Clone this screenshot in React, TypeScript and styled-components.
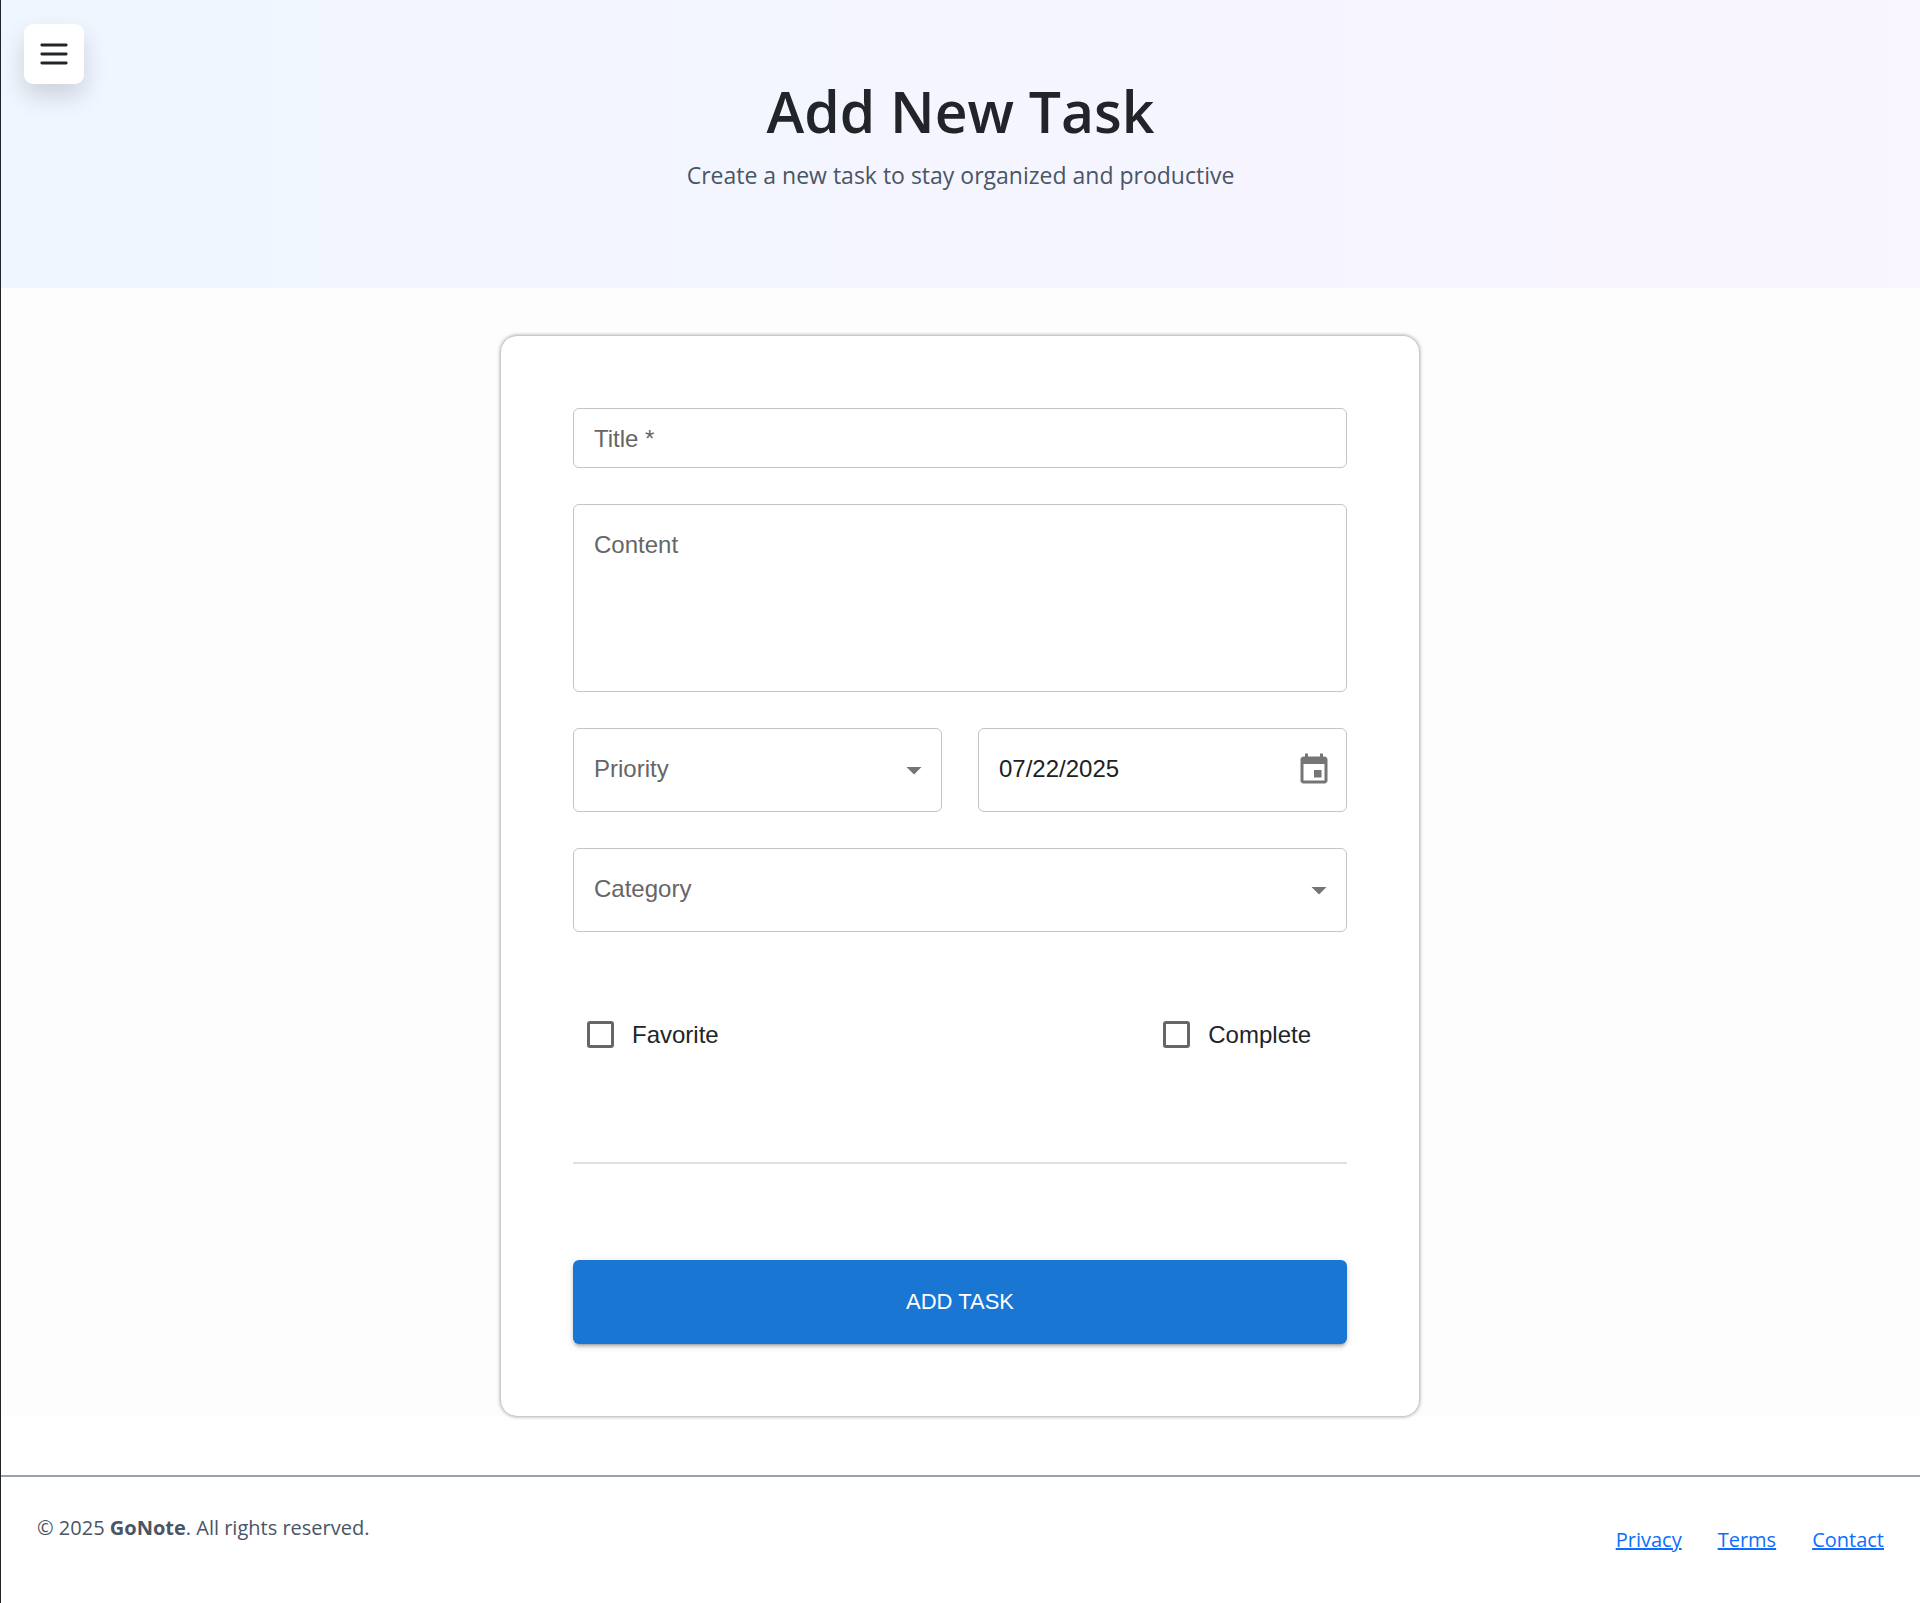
import React from "react";
import styled, { createGlobalStyle } from "styled-components";

const sans = `"Open Sans", "Noto Sans", sans-serif`;
const formSans = `"Liberation Sans", Arial, sans-serif`;

const GlobalStyle = createGlobalStyle`
  *, *::before, *::after { box-sizing: border-box; }
  body {
    margin: 0;
    background: #fff;
    color: #212529;
    font-family: ${sans};
  }
`;

const Page = styled.div`
  min-height: 100vh;
  display: flex;
  flex-direction: column;
  border-left: 1px solid #212529;
`;

const MenuButton = styled.button`
  position: fixed;
  top: 24px;
  left: 24px;
  z-index: 10;
  width: 60px;
  height: 60px;
  padding: 0;
  display: grid;
  place-items: center;
  border: 0;
  border-radius: 9px;
  background: #fff;
  color: #212529;
  box-shadow: 0 12px 24px rgba(0, 0, 0, 0.15);
  cursor: pointer;
`;

const Hero = styled.header`
  min-height: 288px;
  padding: 72px 24px;
  text-align: center;
  background: linear-gradient(to right, #eff6ff, #faf5ff);
`;

const HeroTitle = styled.h1`
  margin: 0;
  font-size: 57px;
  line-height: 78px;
  font-weight: 600;
`;

const HeroText = styled.p`
  margin: 7px 0 0;
  font-size: 23px;
  line-height: 36px;
  color: #4a5565;
`;

const Main = styled.main`
  padding: 48px 25px 0 24px;
  background: #fdfdfd;
`;

const Card = styled.form`
  max-width: 918px;
  margin: 0 auto;
  padding: 72px;
  display: flex;
  flex-direction: column;
  gap: 36px;
  border-radius: 16px;
  background: #fff;
  box-shadow: 0 0 4px rgba(0, 0, 0, 0.5);
  font-family: ${formSans};
`;

const FieldRow = styled.div`
  display: grid;
  grid-template-columns: 1fr 1fr;
  gap: 36px;
`;

/* Label, control and trailing icon share one grid cell. */
const Field = styled.div<{ $compact?: boolean }>`
  display: grid;
  grid-template-areas: "cell";
  border: 1px solid #c4c4c4;
  border-radius: 6px;
  font-size: 24px;
  line-height: 34px;

  > * { grid-area: cell; }
  > label, > input, > textarea, > select {
    padding: ${(p) => (p.$compact ? "13px 20px 11px" : "23px 20px 25px")};
  }
  > label { color: #666; pointer-events: none; z-index: 1; }
  &:focus-within { border-color: #1976d2; }
`;

const controlReset = `
  width: 100%;
  margin: 0;
  border: 0;
  outline: 0;
  border-radius: 6px;
  background: transparent;
  color: #212121;
  font: inherit;
`;

const Input = styled.input`${controlReset}`;
const TextArea = styled.textarea`${controlReset} display: block; resize: none; height: 186px;`;
const Select = styled.select`${controlReset} appearance: none; height: 82px;`;

const FieldIcon = styled.span`
  justify-self: end;
  align-self: center;
  display: flex;
  margin-right: 9px;
  color: #757575;
  pointer-events: none;
`;

const DateButton = styled.button`
  justify-self: end;
  align-self: center;
  display: flex;
  margin-right: 14px;
  padding: 0;
  border: 0;
  background: transparent;
  color: #757575;
  cursor: pointer;
`;

const Options = styled.div`
  display: flex;
  align-items: center;
  justify-content: space-between;
  min-height: 63px;
  margin-top: 35px;
  padding: 0 36px 0 14px;
`;

const Option = styled.label`
  display: flex;
  align-items: center;
  gap: 18px;
  font-size: 24px;
  line-height: 36px;
  cursor: pointer;
`;

const Checkbox = styled.input`
  appearance: none;
  width: 27px;
  height: 27px;
  margin: 0;
  border: 3px solid #666;
  border-radius: 3px;
  background: transparent;
  &:checked { background: #1976d2; border-color: #1976d2; }
`;

const Divider = styled.hr`
  width: 100%;
  height: 2px;
  margin: 60px 0;
  border: 0;
  background: #e0e0e0;
`;

const SubmitButton = styled.button`
  height: 84px;
  border: 0;
  border-radius: 6px;
  background: #1976d2;
  color: #fff;
  font-family: ${formSans};
  font-size: 22px;
  line-height: 36px;
  font-weight: 500;
  text-transform: uppercase;
  cursor: pointer;
  box-shadow: 0 4px 2px -3px rgba(0, 0, 0, 0.2), 0 3px 3px rgba(0, 0, 0, 0.14),
    0 2px 8px rgba(0, 0, 0, 0.12);
`;

const Footer = styled.footer`
  display: flex;
  justify-content: space-between;
  margin-top: 59px;
  padding: 36px;
  border-top: 2px solid #99a1af;
  font-size: 20px;
  line-height: 30px;
  color: #4a5565;
`;

const Copyright = styled.p`
  margin: 0;
`;

const FooterNav = styled.nav`
  display: flex;
  gap: 36px;
  padding-top: 12px;
`;

const FooterLink = styled.a`
  color: #0d6efd;
  text-decoration: underline;
`;

const MenuIcon = () => (
  <svg
    width="36"
    height="36"
    viewBox="0 0 36 36"
    stroke="currentColor"
    strokeWidth="2.8"
    strokeLinecap="round"
    aria-hidden="true"
  >
    <path d="M5.8 9h24.4M5.8 18h24.4M5.8 27h24.4" />
  </svg>
);

const ArrowIcon = () => (
  <svg width="36" height="36" viewBox="0 0 24 24" fill="currentColor" aria-hidden="true">
    <path d="M7 10l5 5 5-5z" />
  </svg>
);

const CalendarIcon = () => (
  <svg width="36" height="36" viewBox="0 0 24 24" fill="currentColor" aria-hidden="true">
    <path d="M17 12h-5v5h5v-5zM16 1v2H8V1H6v2H5c-1.11 0-1.99.9-1.99 2L3 19c0 1.1.89 2 2 2h14c1.1 0 2-.9 2-2V5c0-1.1-.9-2-2-2h-1V1h-2zm3 18H5V8h14v11z" />
  </svg>
);

const SelectField = ({ id, label }: { id: string; label: string }) => (
  <Field>
    <label htmlFor={id}>{label}</label>
    <Select id={id} defaultValue="">
      <option value="" />
    </Select>
    <FieldIcon>
      <ArrowIcon />
    </FieldIcon>
  </Field>
);

export default function App() {
  return (
    <>
      <GlobalStyle />
      <Page>
        <MenuButton type="button" aria-label="Menu">
          <MenuIcon />
        </MenuButton>
        <Hero>
          <HeroTitle>Add New Task</HeroTitle>
          <HeroText>Create a new task to stay organized and productive</HeroText>
        </Hero>
        <Main>
          <Card onSubmit={(e) => e.preventDefault()}>
            <Field $compact>
              <label htmlFor="title">Title *</label>
              <Input id="title" type="text" required />
            </Field>
            <Field>
              <label htmlFor="content">Content</label>
              <TextArea id="content" />
            </Field>
            <FieldRow>
              <SelectField id="priority" label="Priority" />
              <Field>
                <Input id="date" type="text" defaultValue="07/22/2025" aria-label="Date" />
                <DateButton type="button" aria-label="Choose date">
                  <CalendarIcon />
                </DateButton>
              </Field>
            </FieldRow>
            <SelectField id="category" label="Category" />
            <Options>
              <Option>
                <Checkbox type="checkbox" />
                Favorite
              </Option>
              <Option>
                <Checkbox type="checkbox" />
                Complete
              </Option>
            </Options>
            <Divider />
            <SubmitButton type="submit">Add Task</SubmitButton>
          </Card>
        </Main>
        <Footer>
          <Copyright>
            © 2025 <strong>GoNote</strong>. All rights reserved.
          </Copyright>
          <FooterNav>
            <FooterLink href="#privacy">Privacy</FooterLink>
            <FooterLink href="#terms">Terms</FooterLink>
            <FooterLink href="#contact">Contact</FooterLink>
          </FooterNav>
        </Footer>
      </Page>
    </>
  );
}
